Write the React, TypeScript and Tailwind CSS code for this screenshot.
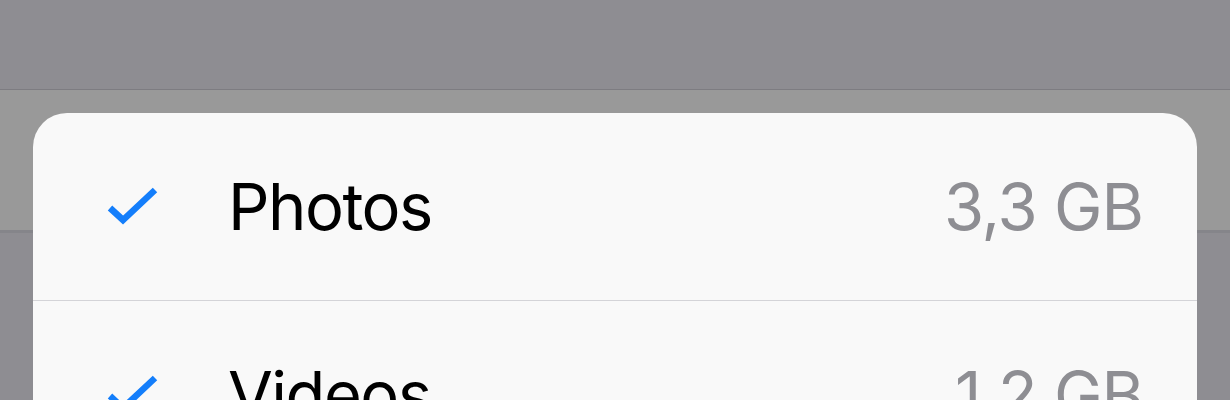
import React from "react";

const ITEMS = [
  { label: "Photos", size: "3,3 GB" },
  { label: "Videos", size: "1,2 GB" },
];

function Check() {
  return (
    <svg width="52" height="40" viewBox="0 0 52 40" className="shrink-0">
      <path
        d="M3 21 L16 33 L48 3"
        fill="none"
        stroke="#147efb"
        strokeWidth="6.5"
        strokeLinecap="butt"
        strokeLinejoin="miter"
      />
    </svg>
  );
}

export default function App() {
  return (
    <div
      className="relative w-full h-[400px] overflow-hidden bg-[#8e8d92]"
      style={{ fontFamily: "Inter, 'Liberation Sans', sans-serif" }}
    >
      {/* dimmed page behind the sheet */}
      <div className="h-[89px] bg-[#8e8d92]" />
      <div className="h-px bg-[#7d7c81]" />
      <div className="h-[140px] bg-[#999999]" />
      <div className="h-[3px] bg-[#85858a]" />

      <div className="absolute left-[33px] right-[33px] top-[113px] bottom-[-200px] rounded-[34px] bg-[#f9f9f9]">
        {ITEMS.map((item, i) => (
          <div key={item.label}>
            {i > 0 && <div className="h-px bg-[#d4d4d8]" />}
            <div className="h-[187px] flex items-center pl-[74px] pr-[54px]">
              <Check />
              <span className="ml-[69px] flex-1 text-[65px] leading-none text-black tracking-[-1.5px]">
                {item.label}
              </span>
              <span className="text-[65px] leading-none text-[#8e8e93] tracking-[-1px]">
                {item.size}
              </span>
            </div>
          </div>
        ))}
      </div>
    </div>
  );
}
